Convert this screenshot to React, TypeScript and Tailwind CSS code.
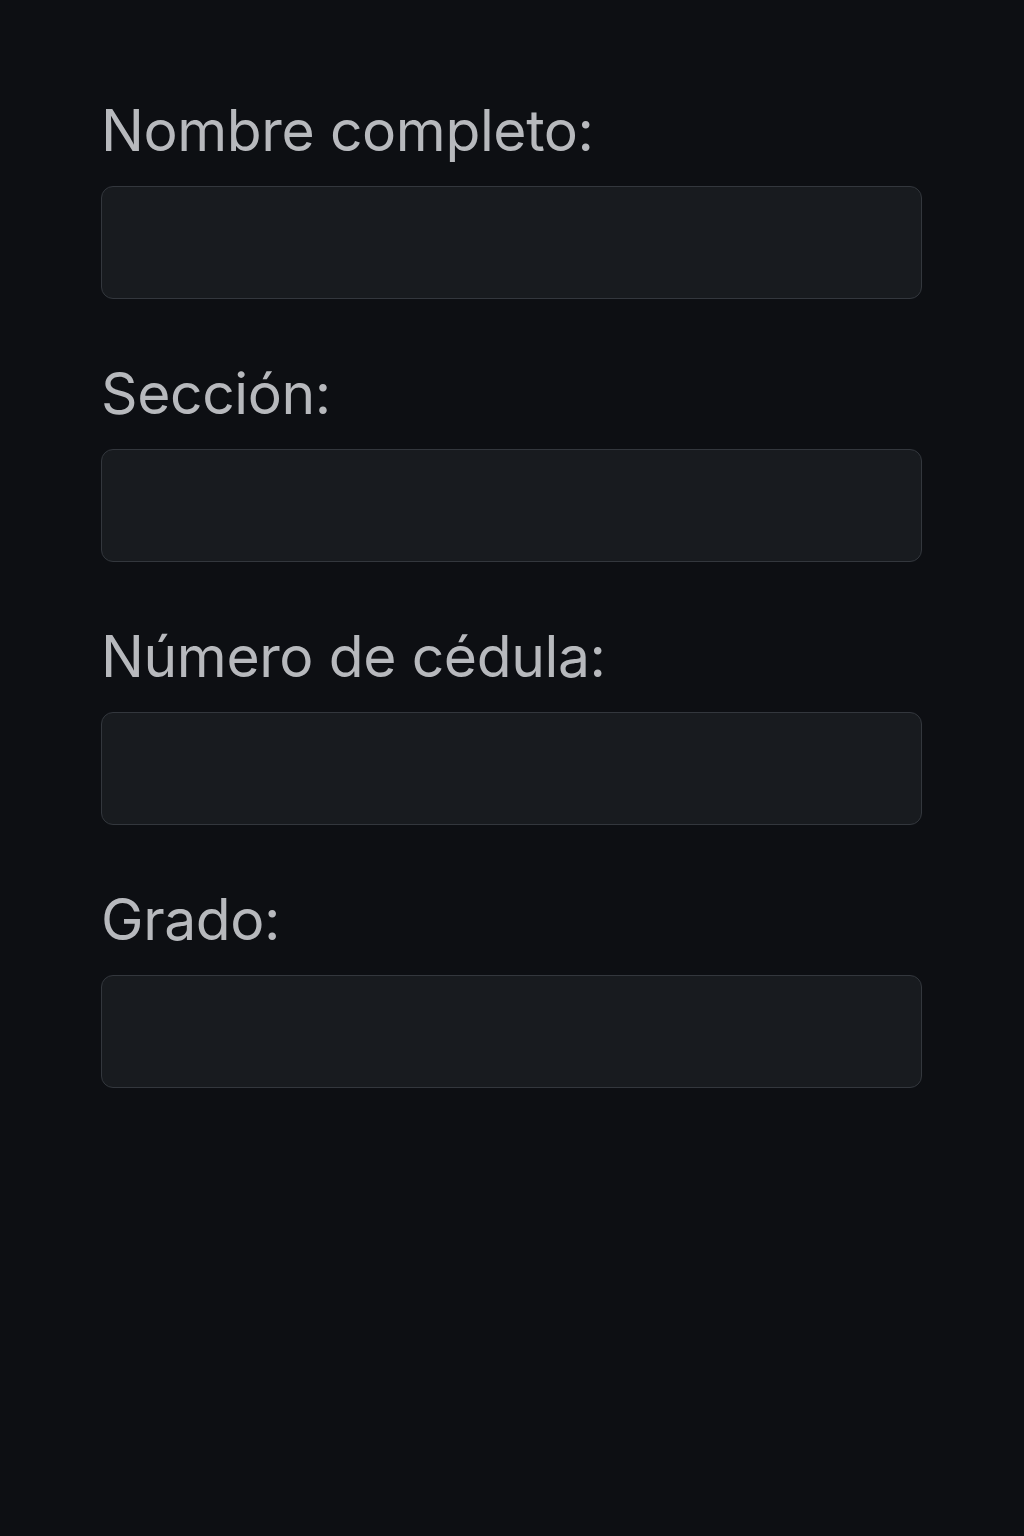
export default function App() {
  const fields = ['Nombre completo:', 'Sección:', 'Número de cédula:', 'Grado:'];
  return (
    <div
      className="min-h-[1536px] w-full bg-[#0d0f13] pl-[101px] pr-[102px] pt-[96px]"
      style={{ fontFamily: 'Inter, "Noto Sans", sans-serif' }}
    >
      <div className="flex flex-col gap-[60px]">
        {fields.map((label) => (
          <div key={label} className="flex flex-col gap-[20px]">
            <label className="text-[57px] leading-[70px] tracking-[-0.4px] text-[#b7b9bd]">{label}</label>
            <input
              type="text"
              className="h-[113px] w-full rounded-[12px] border border-[#33373d] bg-[#181b1f] outline-none"
            />
          </div>
        ))}
      </div>
    </div>
  );
}
